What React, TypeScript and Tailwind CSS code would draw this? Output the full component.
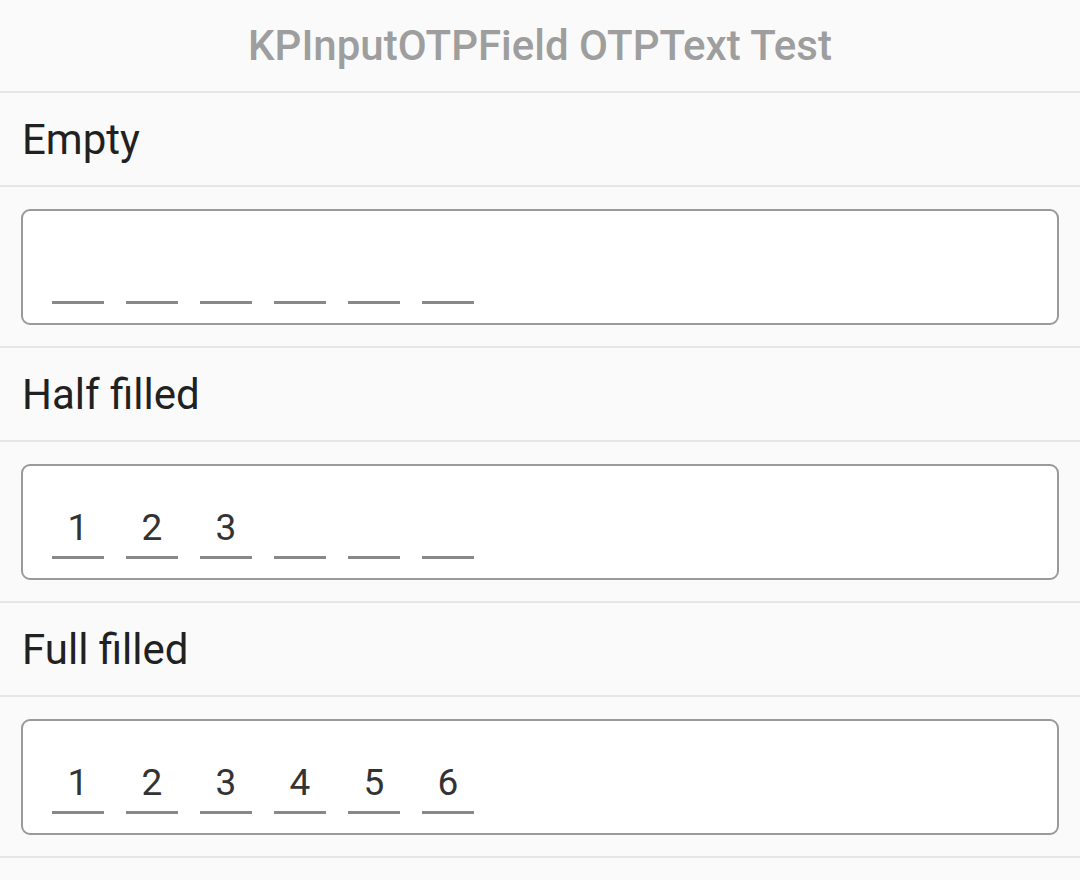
const otpLength = 6

type OTPBoxProps = {
    value: string
}

const OTPBox = ({value}: OTPBoxProps) => {
    const slots = Array.from({length: otpLength}, (_, i) => value[i] ?? '')

    return (
        <div className="px-[21px] pt-[22px] pb-[21px] border-b-2 border-[#e6e6e6]">
            <div className="h-[116px] bg-white border-2 border-[#9a9a9a] rounded-[9px] flex items-end gap-[22px] pl-[29px] pb-[19px]">
                {slots.map((digit, i) => (
                    <div key={i} className="w-[52px] flex flex-col items-center">
                        <span className="text-[37px] leading-[43px] h-[52px] pb-[7px] flex items-end text-[#333333]">{digit}</span>
                        <div className="w-full h-[3px] bg-[#888888]"/>
                    </div>
                ))}
            </div>
        </div>
    )
}

const Label = ({text}: {text: string}) => (
    <div className="h-[94px] flex items-center px-[22px] border-b-2 border-[#e6e6e6] text-[42px] text-[#212121]">
        {text}
    </div>
)

export default function App() {
    return (
        <div className="min-h-[880px] bg-[#fafafa]" style={{fontFamily: 'Roboto, "Noto Sans", sans-serif'}}>
            <header className="h-[93px] flex items-center justify-center border-b-2 border-[#e6e6e6]">
                <h1 className="text-[42px] font-medium text-[#9e9e9e]">KPInputOTPField OTPText Test</h1>
            </header>
            <Label text="Empty"/>
            <OTPBox value=""/>
            <Label text="Half filled"/>
            <OTPBox value="123"/>
            <Label text="Full filled"/>
            <OTPBox value="123456"/>
        </div>
    )
}
